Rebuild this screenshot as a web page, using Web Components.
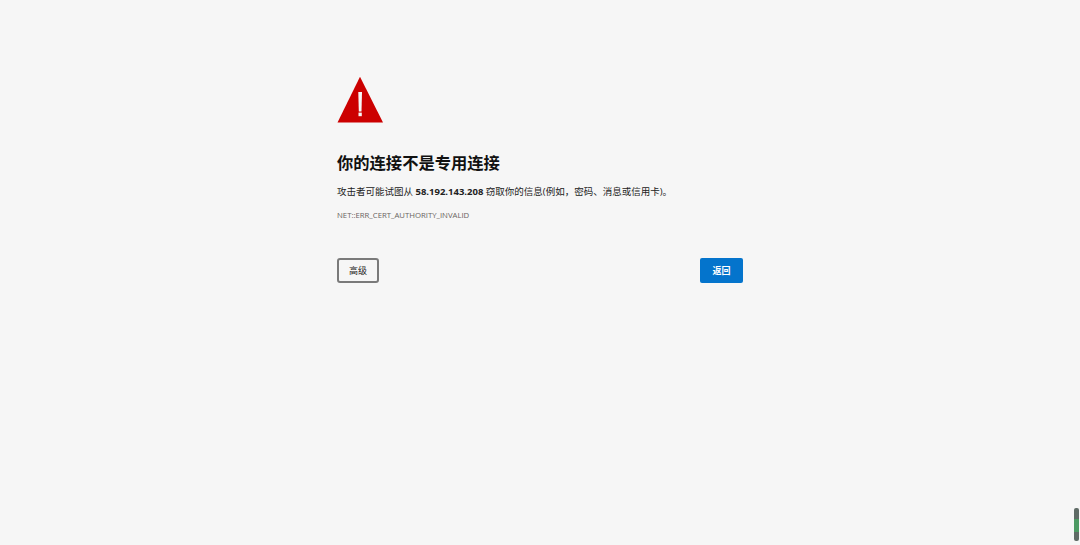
<!DOCTYPE html>
<html lang="zh-CN"><head><meta charset="utf-8"><title>隐私错误</title>
<style>
html,body{margin:0;height:100%;background:#f6f6f6;overflow:hidden}
body{font-family:"Open Sans","Noto Sans CJK SC",sans-serif;color:#111}
</style></head><body>
<error-page>
  <warning-icon slot="icon"></warning-icon>
  <span slot="title">你的连接不是专用连接</span>
  <span slot="message">攻击者可能试图从 <b>58.192.143.208</b> 窃取你的信息(例如，密码、消息或信用卡)。</span>
  <span slot="code">NET::ERR_CERT_AUTHORITY_INVALID</span>
  <action-button slot="left">高级</action-button>
  <action-button slot="right" primary>返回</action-button>
</error-page>
<scroll-thumb></scroll-thumb>
<script>
function def(name, css, html){
  customElements.define(name, class extends HTMLElement{
    constructor(){super();this.attachShadow({mode:"open"}).innerHTML="<style>"+css+"</style>"+html;}
  });
}
def("error-page",`
:host{display:block;box-sizing:border-box;width:406px;margin-left:337px;padding-top:76px}
.icon{display:block;height:47px}
h1{margin:29px 0 0;font-size:16.3px;line-height:22px;font-weight:700;color:#111}
p{margin:11px 0 0;font-size:9.5px;line-height:14px;color:#222}
.code{margin-top:10px;font-size:7.75px;line-height:12px;color:#6a6462}
.actions{display:flex;justify-content:space-between;margin-top:37px}
`,`<div class="icon"><slot name="icon"></slot></div>
<h1><slot name="title"></slot></h1>
<p><slot name="message"></slot></p>
<div class="code"><slot name="code"></slot></div>
<div class="actions"><slot name="left"></slot><slot name="right"></slot></div>`);
def("warning-icon",`:host{display:block;width:47px;height:47px}svg{display:block}`,
`<svg width="47" height="47" viewBox="0 0 47 47"><path d="M23 0.8 46 46.5H0.5Z" fill="#cc0000"/><path d="M21.3 16h3.7l-.5 19.5h-2.7Z" fill="#f6f6f6"/><rect x="21.5" y="36.6" width="3.3" height="3.6" fill="#f6f6f6"/></svg>`);
def("action-button",`
:host{display:flex;align-items:center;justify-content:center;box-sizing:border-box;width:42px;height:25px;font-size:9px;border-radius:3px;background:#f6f6f6;border:2px solid #7a7a7a;color:#222}
:host([primary]){width:43px;background:#0474cc;border:0;border-radius:2px;color:#fff;font-weight:700}
`,`<slot></slot>`);
def("scroll-thumb",`
:host{position:absolute;left:1074px;top:508px;width:5px;height:33px;border-radius:2px;overflow:hidden;background:#5f6b66;display:block}
div{height:13px;margin-top:11px;background:#4c9a63}
`,`<div></div>`);
</script>
</body></html>
